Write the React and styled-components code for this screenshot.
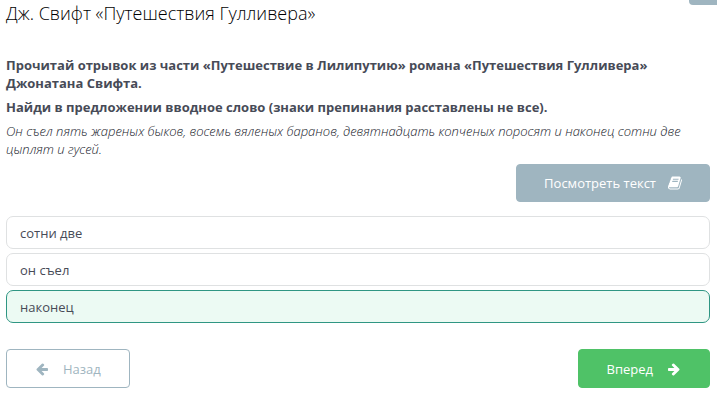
import React, { useState } from 'react';
import styled, { createGlobalStyle } from 'styled-components';

const GlobalStyle = createGlobalStyle`
  * {
    box-sizing: border-box;
  }
  body {
    margin: 0;
    background: #fff;
    color: #474b57;
    font-family: 'Open Sans', 'Noto Sans', sans-serif;
    font-size: 13px;
    line-height: 18px;
  }
`;

const Page = styled.main`
  position: relative;
  padding: 0 7px 13px 6px;
`;

const CornerButton = styled.button`
  position: absolute;
  top: 0;
  right: 0;
  width: 28px;
  height: 5px;
  padding: 0;
  border: 0;
  border-radius: 0 0 0 4px;
  background: #9fb5c0;
`;

const Title = styled.h1`
  margin: 0 0 29px;
  color: #000;
  font-size: 18px;
  font-weight: 300;
  line-height: 27px;
`;

const Paragraph = styled.p`
  margin: 0 0 6px;
`;

const Quote = styled.em`
  color: #20232c;
  font-weight: 300;
`;

const Toolbar = styled.div`
  display: flex;
  justify-content: ${({ $spread }) => $spread ? 'space-between' : 'flex-end'};
`;

const Button = styled.button`
  display: flex;
  align-items: center;
  gap: ${({ $small }) => $small ? 12 : 14}px;
  height: ${({ $small }) => $small ? 38 : 39}px;
  padding: 0 ${({ $small }) => $small ? 27 : 28}px;
  border: 1px solid ${({ $border, $color }) => $border || $color};
  border-radius: 4px;
  background: ${({ $color }) => $color};
  color: ${({ $text }) => $text || '#fff'};
  font: inherit;
  cursor: pointer;
`;

const Glyph = styled.svg`
  width: 14px;
  height: 14px;
  fill: currentColor;
`;

const Answers = styled.form`
  display: grid;
  gap: 4px;
  margin: 14px 0 26px;
`;

const HiddenRadio = styled.input`
  position: absolute;
  opacity: 0;
  margin: 0;
`;

const Answer = styled.label`
  display: flex;
  align-items: center;
  min-height: 33px;
  padding: 0 13px;
  border: 1px solid ${({ $checked }) => $checked ? '#2f9683' : '#dfe1e2'};
  border-radius: 7px;
  background: ${({ $checked }) => $checked ? '#ecfaf3' : '#fff'};
  cursor: pointer;
`;

const BookIcon = () => (
  <Glyph viewBox="0 0 1664 1664" aria-hidden="true">
    <path
      transform="translate(0 -64)"
      d="M1639 478q40 57 18 129l-275 906q-19 64-76.500 107.500t-122.500 43.500h-923q-77 0-148.500-53.500t-99.500-131.500q-24-67-2-127 0-4 3-27t4-37q1-8-3-21.500t-3-19.500q2-11 8-21t16.500-23.500 16.500-23.500q23-38 45-91.500t30-91.500q3-10 .5-30t-.5-28q3-11 17-28t17-23q21-36 42-92t25-90q1-9-2.500-32t.5-28q4-13 22-30.500t22-22.500q19-26 42.500-84.500t27.500-96.500q1-8-3-25.500t-2-26.500q2-8 9-18t18-23 17-21q8-12 16.500-30.500t15-35 16-36 19.500-32 26.500-23.500 36-11.500 47.500 5.500l-1 3q38-9 51-9h761q74 0 114 56t18 130l-274 906q-36 119-71.500 153.500t-128.500 34.500h-869q-27 0-38 15-11 16-1 43 24 70 144 70h923q29 0 56-15.500t35-41.500l300-987q7-22 5-57 38 15 59 43zm-1064 2q-4 13 2 22.500t20 9.500h608q13 0 25.500-9.500t16.500-22.500l21-64q4-13-2-22.500t-20-9.500h-608q-13 0-25.500 9.500t-16.500 22.500zm-83 256q-4 13 2 22.500t20 9.500h608q13 0 25.500-9.500t16.500-22.500l21-64q4-13-2-22.500t-20-9.500h-608q-13 0-25.500 9.500t-16.500 22.500z"
    />
  </Glyph>
);

const ArrowIcon = ({ left }) => (
  <Glyph viewBox="0 0 1792 1792" aria-hidden="true">
    <path
      transform={left ? 'matrix(-1 0 0 1 1792 0)' : undefined}
      d="M1600 960q0 54-37 91l-651 651q-39 37-91 37-51 0-90-37l-75-75q-38-38-38-91t38-91l293-293h-704q-52 0-84.500-37.500t-32.500-90.500v-128q0-53 32.500-90.500t84.500-37.500h704l-293-294q-38-36-38-90t38-90l75-75q38-38 90-38 53 0 91 38l651 651q37 35 37 90z"
    />
  </Glyph>
);

const answers = ['сотни две', 'он съел', 'наконец'];

const App = () => {
  const [selected, setSelected] = useState('наконец');

  return (
    <Page>
      <GlobalStyle />
      <CornerButton aria-label="Меню" />
      <Title>Дж. Свифт «Путешествия Гулливера»</Title>
      <Paragraph>
        <strong>
          Прочитай отрывок из части «Путешествие в Лилипутию» романа «Путешествия Гулливера» Джонатана Свифта.
        </strong>
      </Paragraph>
      <Paragraph>
        <strong>Найди в предложении вводное слово (знаки препинания расставлены не все).</strong>
      </Paragraph>
      <Paragraph>
        <Quote>
          Он съел пять жареных быков, восемь вяленых баранов, девятнадцать копченых поросят и наконец сотни две цыплят и гусей.
        </Quote>
      </Paragraph>
      <Toolbar>
        <Button type="button" $small $color="#9fb5c0">
          Посмотреть текст
          <BookIcon />
        </Button>
      </Toolbar>
      <Answers>
        {answers.map(answer => (
          <Answer key={answer} $checked={answer === selected}>
            <HiddenRadio
              type="radio"
              name="answer"
              value={answer}
              checked={answer === selected}
              onChange={() => setSelected(answer)}
            />
            {answer}
          </Answer>
        ))}
      </Answers>
      <Toolbar $spread>
        <Button type="button" $color="#fff" $border="#9fb5c0" $text="#9fb5c0">
          <ArrowIcon left />
          Назад
        </Button>
        <Button type="button" $color="#4fc267">
          Вперед
          <ArrowIcon />
        </Button>
      </Toolbar>
    </Page>
  );
};

export default App;
